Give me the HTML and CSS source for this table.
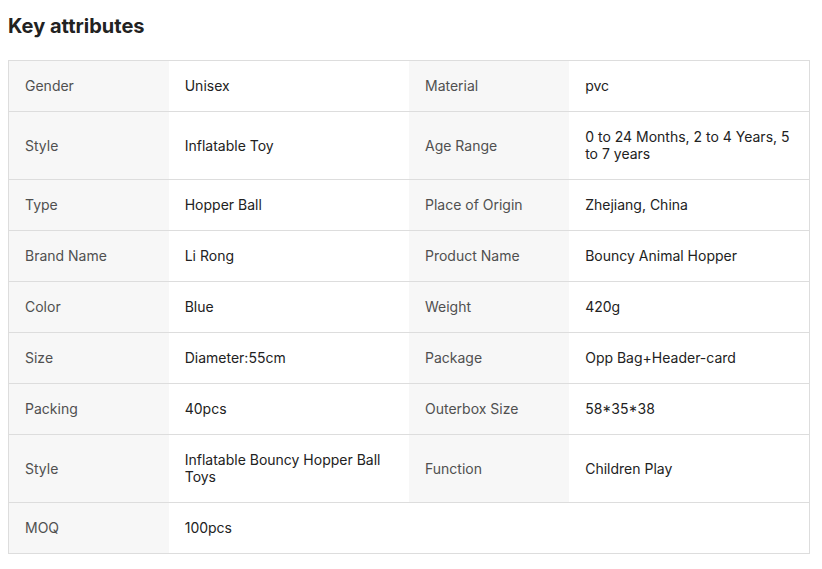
FILE: index.html
```html
<!DOCTYPE html>
<html>
<head>
<meta charset="utf-8">
<link rel="stylesheet" href="styles.css">
</head>
<body>
<h2 class="title">Key attributes</h2>
<table class="attrs">
<colgroup><col class="c-label"><col class="c-value"><col class="c-label"><col class="c-value"></colgroup>
<tr><td class="label">Gender</td><td class="value">Unisex</td><td class="label">Material</td><td class="value">pvc</td></tr>
<tr><td class="label">Style</td><td class="value">Inflatable Toy</td><td class="label">Age Range</td><td class="value">0 to 24 Months, 2 to 4 Years, 5 to 7 years</td></tr>
<tr><td class="label">Type</td><td class="value">Hopper Ball</td><td class="label">Place of Origin</td><td class="value">Zhejiang, China</td></tr>
<tr><td class="label">Brand Name</td><td class="value">Li Rong</td><td class="label">Product Name</td><td class="value">Bouncy Animal Hopper</td></tr>
<tr><td class="label">Color</td><td class="value">Blue</td><td class="label">Weight</td><td class="value">420g</td></tr>
<tr><td class="label">Size</td><td class="value">Diameter:55cm</td><td class="label">Package</td><td class="value">Opp Bag+Header-card</td></tr>
<tr><td class="label">Packing</td><td class="value">40pcs</td><td class="label">Outerbox Size</td><td class="value">58*35*38</td></tr>
<tr><td class="label">Style</td><td class="value">Inflatable Bouncy Hopper Ball Toys</td><td class="label">Function</td><td class="value">Children Play</td></tr>
<tr><td class="label">MOQ</td><td class="value">100pcs</td><td class="empty" colspan="2"></td></tr>
</table>
</body>
</html>
```
FILE: styles.css
```css
html, body {
  margin: 0;
  padding: 0;
  background: #fff;
}
body {
  padding: 12px 8px 0 8px;
  font-family: Inter, "Noto Sans", sans-serif;
  color: #222;
}
.title {
  margin: 0 0 20px 0;
  font-size: 20px;
  line-height: 28px;
  font-weight: 700;
  color: #222;
}
.attrs {
  border-collapse: collapse;
  table-layout: fixed;
  width: 802px;
  border: 1px solid #ddd;
}
.c-label { width: 160px; }
.c-value { width: 240px; }
.attrs tr {
  border-top: 1px solid #ddd;
}
.attrs td {
  padding: 16px 16px 17px 16px;
  font-size: 14px;
  line-height: 17px;
  vertical-align: middle;
}
.label {
  background: #f7f7f7;
  color: #505050;
}
.value {
  background: #fff;
  color: #222;
}
.empty {
  background: #fff;
}
```
